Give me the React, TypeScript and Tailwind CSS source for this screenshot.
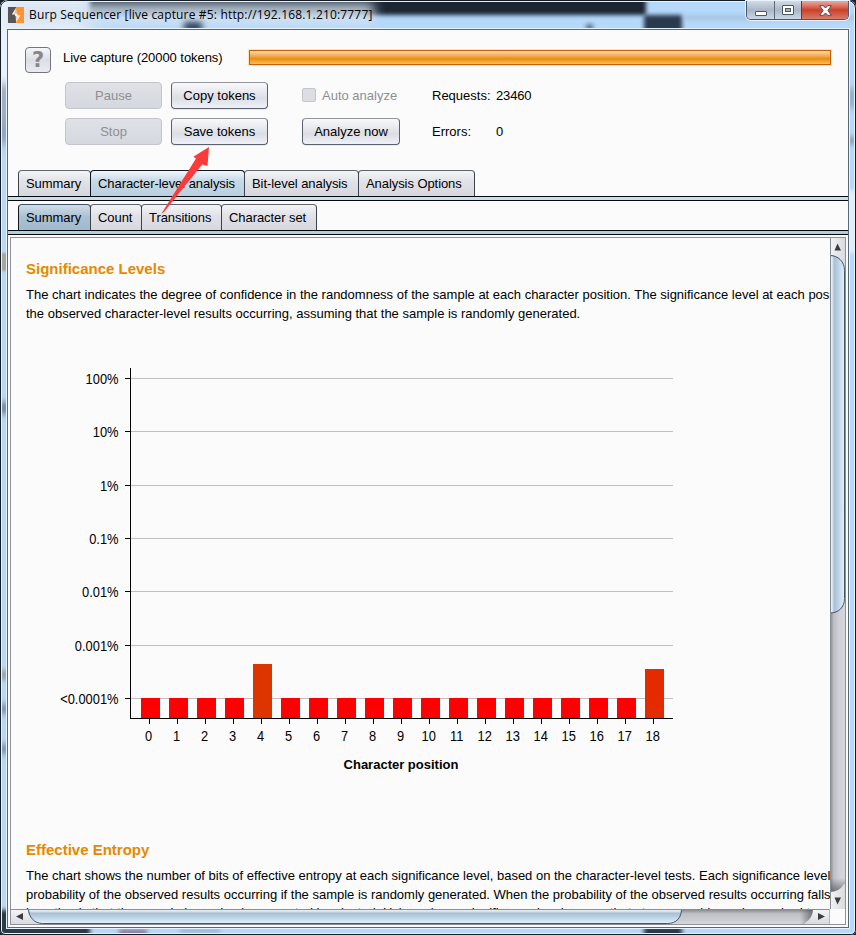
import type { ReactNode } from "react";

const SANS = "font-['Liberation_Sans',Arial,sans-serif]";

const yTicks = [
  { y: 378, label: "100%" },
  { y: 431, label: "10%" },
  { y: 485, label: "1%" },
  { y: 538, label: "0.1%" },
  { y: 591, label: "0.01%" },
  { y: 645, label: "0.001%" },
  { y: 698, label: "<0.0001%" },
];

const bars = Array.from({ length: 19 }, (_, i) => {
  if (i === 4) return { i, top: 664, color: "#dd3500" };
  if (i === 18) return { i, top: 669, color: "#e42b00" };
  return { i, top: 698, color: "#ff0000" };
});

function Button({ children, disabled }: { children: ReactNode; disabled?: boolean }) {
  return (
    <button
      className={
        disabled
          ? "flex h-[27px] items-center justify-center rounded-[4px] border border-[#c2c5cc] bg-linear-to-b from-[#dfe1e6] to-[#d5d8df] text-[#8e8f94]"
          : "flex h-[27px] items-center justify-center rounded-[4px] border border-[#5a616c] border-t-[#8f949d] bg-linear-to-b from-[#f9f9fb] via-[#dcdee5] via-60% to-[#eff1f8] text-black shadow-[0_1px_0_#e8eaee]"
      }
    >
      {children}
    </button>
  );
}

function Tab({ children, width, tone }: { children: ReactNode; width: string; tone?: "light" | "dark" }) {
  const fill =
    tone === "light"
      ? "border-[#10151f] from-[#f1f6fa] via-[#c6d9e7] via-40% to-[#b9cfe0]"
      : tone === "dark"
        ? "border-[#10151f] border-t-[#3f5468] from-[#cfdde8] via-[#a9bfd2] via-50% to-[#a3bacd]"
        : "border-[#3c424c] border-t-[#5e636c] from-[#f4f5f7] via-[#e2e3e8] via-40% to-[#d6d7de]";
  return (
    <div className={`-mr-px flex h-[26px] items-center rounded-t-[4px] border border-b-0 bg-linear-to-b pl-[7px] tracking-[-0.07px] ${fill} ${width}`}>
      {children}
    </div>
  );
}

function Chart() {
  return (
    <svg width="680" height="430" viewBox="11 350 680 430" className="block" shapeRendering="crispEdges">
      {yTicks.map((t) => (
        <g key={t.label}>
          <rect x="131" y={t.y} width="542" height="1" fill="#c0c0c0" />
          <rect x="125" y={t.y} width="5" height="1" fill="#000" />
          <text transform={`translate(118.5 ${t.y + 6}) scale(.92 1)`} textAnchor="end" fontSize="14">
            {t.label}
          </text>
        </g>
      ))}
      {bars.map((b) => (
        <g key={b.i}>
          <rect x={141 + b.i * 28} y={b.top} width="19" height={718 - b.top} fill={b.color} />
          <rect x={149 + b.i * 28} y="719" width="1" height="5" fill="#000" />
          <text transform={`translate(${148.7 + b.i * 28} 741) scale(.92 1)`} textAnchor="middle" fontSize="14">
            {b.i}
          </text>
        </g>
      ))}
      <rect x="130" y="368" width="1" height="351" fill="#000" />
      <rect x="130" y="718" width="543" height="1" fill="#000" />
      <text x="401" y="769" textAnchor="middle" fontSize="13" fontWeight="bold">
        Character position
      </text>
    </svg>
  );
}

function WindowControls() {
  return (
    <div className="flex h-[19px] w-[103px] overflow-hidden rounded-b-[5px] border border-t-0 border-[#4a5666] shadow-[0_0_0_1px_#e8f2fc]">
      <div className="flex w-[28px] items-center justify-center border-r border-[#5d6b7d] bg-linear-to-b from-[#d3dbe5] via-[#a9b7c8] via-50% to-[#c9d8e8]">
        <svg width="12" height="5" className="mt-1.5">
          <rect x="0.5" y="0.5" width="11" height="4" rx="0.5" fill="#fff" stroke="#4d5766" />
        </svg>
      </div>
      <div className="flex w-[27px] items-center justify-center border-r border-[#5d3b40] bg-linear-to-b from-[#d3dbe5] via-[#a9b7c8] via-50% to-[#c9d8e8]">
        <svg width="12" height="10">
          <rect x="0.5" y="0.5" width="11" height="9" rx="0.5" fill="#fff" stroke="#4d5766" />
          <rect x="3.5" y="3.5" width="5" height="3" fill="#9fb3c9" stroke="#4d5766" />
        </svg>
      </div>
      <div className="flex flex-1 items-center justify-center bg-linear-to-b from-[#eaa99f] via-[#c9402b] via-50% to-[#d77b66]">
        <svg width="13" height="11" viewBox="0 0 13 11">
          <path d="M.7.7h3.6l2.2 2.3L8.700.7h3.600L8.900 5.500l3.400 4.800H8.700L6.500 8 4.300 10.300H.7L4.100 5.500z" fill="#fff" stroke="#574b58" />
        </svg>
      </div>
    </div>
  );
}

function VerticalScrollbar() {
  return (
    <svg width="15" height="671" viewBox="830 238 15 671" className="block">
      <defs>
        <linearGradient id="vTrack">
          <stop offset="0" stopColor="#84868c" />
          <stop offset=".25" stopColor="#bdbec4" />
          <stop offset=".6" stopColor="#d0d1d7" />
          <stop offset="1" stopColor="#d6d7dd" />
        </linearGradient>
        <linearGradient id="vThumb">
          <stop offset="0" stopColor="#f0f6fa" />
          <stop offset=".15" stopColor="#dce8f0" />
          <stop offset=".3" stopColor="#a9c0d4" />
          <stop offset=".65" stopColor="#c3d8e8" />
          <stop offset="1" stopColor="#e2f3fd" />
        </linearGradient>
        <linearGradient id="vEnd">
          <stop offset="0" stopColor="#f4f4f6" />
          <stop offset="1" stopColor="#d9dadf" />
        </linearGradient>
        <linearGradient id="vShade" x2="0" y2="1">
          <stop offset="0" stopColor="#55575d" stopOpacity="0" />
          <stop offset="1" stopColor="#55575d" stopOpacity=".75" />
        </linearGradient>
      </defs>
      <rect x="830" y="238" width="15" height="671" fill="url(#vTrack)" />
      <rect x="830" y="878" width="15" height="14" fill="url(#vShade)" />
      <path d="M830 238h15v32q-3-15-15-15z" fill="url(#vEnd)" />
      <path d="M830 909v-17q9 0 14-8h1v25z" fill="url(#vEnd)" />
      <path d="M830 255.500c8 0 14.500 6 14.500 15v328c0 9-6 14.500-14.500 14.500" fill="url(#vThumb)" stroke="#3c566e" />
      <path d="M830.500 238v671" stroke="#898d96" />
      <path d="M834.500 250.500l3-7 3.500 7zM834.500 897.500h6.500l-3.500 7z" fill="#3a3c40" />
    </svg>
  );
}

function HorizontalScrollbar() {
  return (
    <svg width="819" height="15" viewBox="11 909 819 15" className="block">
      <defs>
        <linearGradient id="hTrack" x2="0" y2="1">
          <stop offset="0" stopColor="#7d7f85" />
          <stop offset=".3" stopColor="#bdbec4" />
          <stop offset="1" stopColor="#d6d7dd" />
        </linearGradient>
        <linearGradient id="hThumb" x2="0" y2="1">
          <stop offset="0" stopColor="#f0f6fa" />
          <stop offset=".15" stopColor="#dce8f0" />
          <stop offset=".3" stopColor="#a9c0d4" />
          <stop offset=".65" stopColor="#c3d8e8" />
          <stop offset="1" stopColor="#e2f3fd" />
        </linearGradient>
        <linearGradient id="hEnd" x2="0" y2="1">
          <stop offset="0" stopColor="#f6f6f8" />
          <stop offset="1" stopColor="#d9dadf" />
        </linearGradient>
        <linearGradient id="hShade">
          <stop offset="0" stopColor="#55575d" stopOpacity="0" />
          <stop offset="1" stopColor="#55575d" stopOpacity=".75" />
        </linearGradient>
      </defs>
      <rect x="11" y="909" width="819" height="15" fill="url(#hTrack)" />
      <rect x="800" y="909" width="13" height="15" fill="url(#hShade)" />
      <path d="M11 909h17q0 10 14 15H11z" fill="url(#hEnd)" />
      <path d="M830 909h-17q0 9-8 14v1h25z" fill="url(#hEnd)" />
      <path d="M28.500 909c0 8 6 14.500 14 14.500h625c9 0 14-6 14-14.500" fill="url(#hThumb)" stroke="#3c566e" />
      <path d="M11 909.500h819" stroke="#898d96" />
      <path d="M829.500 909v15" stroke="#b5b7bd" />
      <path d="M23 913v7l-7-3.500zM818 913v7l7-3.500z" fill="#3a3c40" />
    </svg>
  );
}

function Backdrop() {
  return (
    <div className="absolute inset-0 overflow-hidden rounded-t-[8px] rounded-b-[5px] bg-[#b5d8fb]">
      <div className="absolute -top-4 -left-5 h-[140px] w-[110px] bg-[#e9f1fa] blur-[10px]" />
      <div className="absolute top-[-8px] left-[90px] h-[23px] w-[556px] bg-[#1b2634] blur-[2px]" />
      <div className="absolute top-[15px] left-[644px] h-[20px] w-[38px] bg-[#2a3a4d] blur-[2px]" />
      <div className="absolute top-[16px] left-[684px] h-[3px] w-[180px] bg-[#a3bad0] blur-[2px]" />
      <div className="absolute top-[3px] left-[8px] h-[22px] w-[366px] bg-[#d3e2f1]/85 blur-[6px]" />
      <div className="absolute top-[22px] left-[184px] h-[10px] w-[18px] bg-[#2d4052] blur-[3px]" />
      <div className="absolute top-[24px] left-[586px] h-[8px] w-[7px] bg-[#5f7690] blur-[2px]" />
      <div className="absolute top-[84px] left-0 h-[60px] w-[8px] bg-[#71839c] blur-[5px]" />
      <div className="absolute top-[253px] left-0 h-[18px] w-[8px] bg-[#a9a69c] blur-[1px]" />
      <div className="absolute top-[402px] left-0 h-[12px] w-[8px] bg-[#61748f] blur-[3px]" />
      <div className="absolute top-[670px] left-0 h-[10px] w-[8px] bg-[#9aa4a8] blur-[2px]" />
      <div className="absolute top-[704px] left-0 h-[10px] w-[8px] bg-[#6c84a3] blur-[3px]" />
      <div className="absolute top-[744px] left-0 h-[10px] w-[8px] bg-[#6c84a3] blur-[3px]" />
      <div className="absolute top-[910px] left-[-4px] h-[30px] w-[94px] bg-[#2d3a47] blur-[2px]" />
      <div className="absolute top-[929px] left-[119px] h-[8px] w-[28px] bg-[#8a7f9f] blur-[2px]" />
      <div className="absolute top-[929px] left-[180px] h-[4px] w-[40px] bg-[#93b2d2] blur-[2px]" />
      <div className="absolute top-[926px] left-[644px] h-[12px] w-[38px] bg-[#2a3a4d] blur-[2px]" />
      <div className="absolute top-[88px] left-[848px] h-[20px] w-[8px] bg-[#8ea6c0] blur-[3px]" />
      <div className="absolute top-[136px] left-[848px] h-[9px] w-[8px] bg-[#8ea6c0] blur-[2px]" />
      <div className="absolute top-[190px] left-[848px] h-[63px] w-[8px] bg-[#e0effd] blur-[2px]" />
      <div className="absolute inset-0 rounded-t-[8px] rounded-b-[5px] border border-[#141c26] shadow-[inset_0_0_0_1px_#e6f2fc]" />
    </div>
  );
}

export default function App() {
  return (
    <div className={`relative h-[935px] w-[856px] overflow-hidden bg-[#1b2027] text-[13px] leading-[15px] text-black ${SANS}`}>
      <Backdrop />
      <div className="relative flex h-full flex-col px-[7px]">
        <header className="flex h-[29px] shrink-0 items-start pl-px">
          <svg width="16" height="16" viewBox="0 0 16 16" className="mt-[7px] shrink-0">
            <rect width="16" height="16" fill="#565656" />
            <rect x="8" width="8" height="16" fill="#ff9331" />
            <path d="M8 1L4.200 7H7v1.800L8 9v-2.500H6.500zM8 15l4.500-6.500H9.500V7H8v2.500h2z" fill="#fff" />
            <path d="M8 .8L4 7.800h3.500L8 15.200l4.500-7H9L8 .8z" fill="#f6e6d6" opacity=".75" />
          </svg>
          <h1 className="mt-[6px] ml-[5px] font-['Open_Sans','Noto_Sans',sans-serif] text-[12px] leading-[18px] tracking-[0.165px] whitespace-nowrap">
            Burp Sequencer [live capture #5: http://192.168.1.210:7777]
          </h1>
          <div className="mt-px ml-auto">
            <WindowControls />
          </div>
        </header>

        <main className="flex h-[899px] flex-col border border-[#5b6773] bg-[#fbfbfb] shadow-[0_0_0_1px_#e6f2fc]">
          <section className="h-[140px] shrink-0 pt-[17px]">
            <div className="ml-[17px] flex h-[27px]">
              <div className="flex h-[26px] w-[26px] items-center justify-center rounded-[4px] border border-[#70757e] bg-linear-to-b from-[#f6f6f8] via-[#dcdee4] to-[#e9ebf0] font-['DejaVu_Sans',sans-serif] text-[21px] font-bold text-[#85878b]">
                ?
              </div>
              <span className="mt-[3px] ml-[12px] w-[186px] tracking-[-0.06px] whitespace-nowrap">Live capture (20000 tokens)</span>
              <div className="mt-[3px] h-[15px] w-[582px] border border-[#c65f05] bg-linear-to-b from-[#fcdca0] via-[#e98d00] via-60% to-[#f9bf50] shadow-[0_0_0_1px_#fbe3bb]" />
            </div>
            <div className="mt-2 ml-[57px] grid grid-cols-[97px_97px_98px_64px_80px] items-center gap-y-[9px]">
              <Button disabled>Pause</Button>
              <div className="ml-[9px] w-[97px] [&>button]:w-full">
                <Button>Copy tokens</Button>
              </div>
              <div className="ml-[43px] flex items-center gap-[6px] whitespace-nowrap text-[#8e8f94]">
                <span className="-mt-0.5 h-[14px] w-[14px] shrink-0 rounded-[2px] border border-[#c2c5cc] bg-[#dcdee4]" />
                Auto analyze
              </div>
              <span className="ml-[75px]">Requests:</span>
              <span className="ml-[75px] tracking-[-0.15px]">23460</span>
              <Button disabled>Stop</Button>
              <div className="ml-[9px] w-[97px] [&>button]:w-full">
                <Button>Save tokens</Button>
              </div>
              <div className="ml-[43px] w-[98px] [&>button]:w-full">
                <Button>Analyze now</Button>
              </div>
              <span className="ml-[75px]">Errors:</span>
              <span className="ml-[75px]">0</span>
            </div>
          </section>

          <nav className="flex h-[26px] shrink-0 pl-[10px] whitespace-nowrap">
            <Tab width="w-[73px]">Summary</Tab>
            <Tab width="w-[155px]" tone="light">Character-level analysis</Tab>
            <Tab width="w-[115px]">Bit-level analysis</Tab>
            <Tab width="w-[117px]">Analysis Options</Tab>
          </nav>
          <div className="h-[5px] shrink-0 border-y border-[#05080d] bg-[#cbdeeb]" />
          <nav className="mt-[3px] flex h-[26px] shrink-0 pl-[10px] whitespace-nowrap">
            <Tab width="w-[73px]" tone="dark">Summary</Tab>
            <Tab width="w-[52px]">Count</Tab>
            <Tab width="w-[81px]">Transitions</Tab>
            <Tab width="w-[96px]">Character set</Tab>
          </nav>
          <div className="h-[5px] shrink-0 border-y border-[#05080d] bg-[#b3cddb]" />

          <div className="mt-[2px] ml-[2px] grid h-[688px] w-[836px] grid-cols-[819px_15px] grid-rows-[671px_15px] border border-[#8f929d]">
            <article className="flex flex-col overflow-hidden whitespace-nowrap">
              <h2 className="mt-[22px] ml-[15px] text-[15px] leading-[18px] font-bold text-[#e58900]">Significance Levels</h2>
              <p className="mt-[7px] ml-[15px] leading-[19px]">
                The chart indicates the degree of confidence in the randomness of the sample at each character position. The significance level at each position indicates the probability of
                <br />
                the observed character-level results occurring, assuming that the sample is randomly generated.
              </p>
              <div className="mt-[27px]">
                <Chart />
              </div>
              <h2 className="mt-[61px] ml-[15px] text-[15px] leading-[18px] font-bold text-[#e58900]">Effective Entropy</h2>
              <p className="mt-[7px] ml-[15px] leading-[19px]">
                <span className="block tracking-[-0.008px]">
                  The chart shows the number of bits of effective entropy at each significance level, based on the character-level tests. Each significance level defines a minimum
                </span>
                <span className="block tracking-[-0.008px]">
                  probability of the observed results occurring if the sample is randomly generated. When the probability of the observed results occurring falls below this level, the
                </span>
                <span className="-mt-px block">
                  hypothesis that the sample is randomly generated is rejected. Using a lower significance level means that stronger evidence is required to reject the hypothesis
                </span>
              </p>
            </article>
            <VerticalScrollbar />
            <HorizontalScrollbar />
            <div className="bg-[#fbfbfb]" />
          </div>
        </main>
      </div>
      <svg className="absolute top-[140px] left-[155px]" width="60" height="80" viewBox="155 140 60 80">
        <path d="M161.500 213.500L196 158.500l-2.700-1.800L209 147l-1.500 19-5.300-1.600L164 212z" fill="#fc3a3a" />
      </svg>
    </div>
  );
}
